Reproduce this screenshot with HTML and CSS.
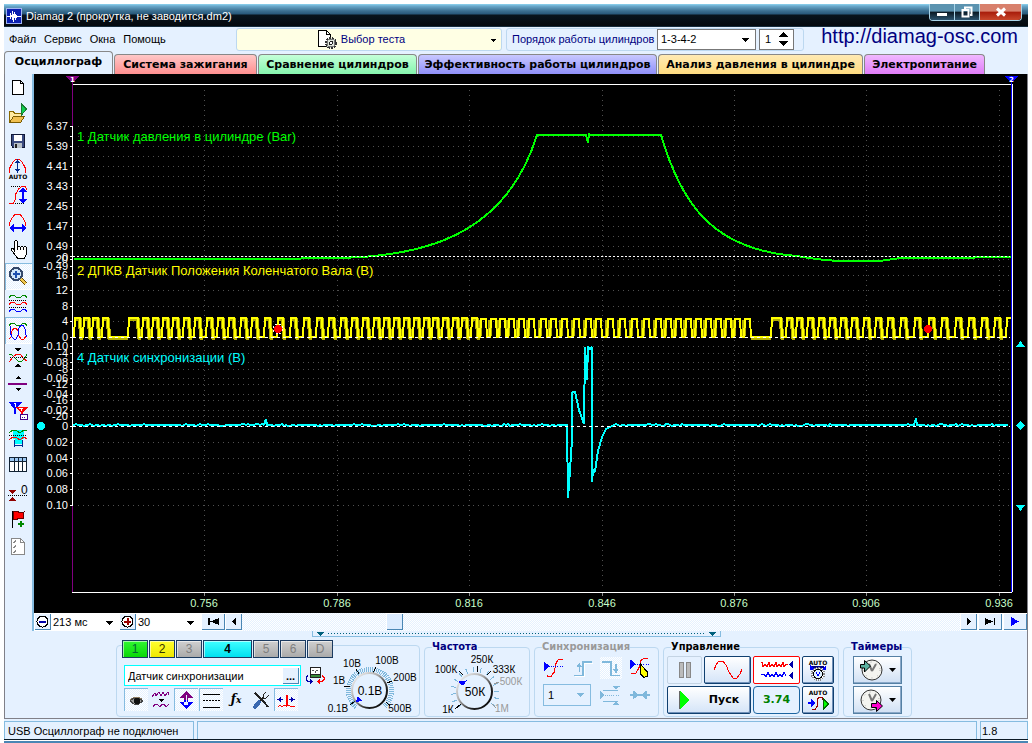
FILE: index.html
```
<!DOCTYPE html>
<html lang="ru">
<head>
<meta charset="utf-8">
<title>Diamag 2</title>
<link rel="stylesheet" href="styles.css">
</head>
<body>
<div class="window">
  <header class="titlebar">
    <svg class="app-icon" viewBox="0 0 16 16" width="16" height="16"><rect width="16" height="16" fill="#9fb4f0"/><rect x="1" y="1" width="14" height="14" fill="#0a1fb0"/><path d="M1 8.500h3M4.500 5v6M5.500 7v2M6.500 3v9M7.500 6v8M8.500 4v6M9.500 6v6M10.500 7v3M11 8.500h4" fill="none" stroke="#fff"/></svg>
    <h1 class="caption">Diamag 2 (прокрутка, не заводится.dm2)</h1>
    <div class="window-buttons">
      <button class="wb" aria-label="Свернуть"><svg viewBox="0 0 12 12" width="12" height="12"><rect x="1" y="7" width="10" height="3" fill="#fff"/></svg></button>
      <button class="wb" aria-label="Восстановить"><svg viewBox="0 0 12 12" width="12" height="12"><path d="M4 3V1.500h6.500V9H9M1.500 4h6v6.500h-6z" fill="none" stroke="#fff" stroke-width="2"/></svg></button>
      <button class="wb wb-close" aria-label="Закрыть"><svg viewBox="0 0 12 12" width="12" height="12"><path d="M2 2.500l8 7M10 2.500l-8 7" stroke="#fff" stroke-width="3"/></svg></button>
    </div>
  </header>

  <div class="menubar">
    <nav class="menu">
      <button>Файл</button><button>Сервис</button><button>Окна</button><button>Помощь</button>
    </nav>
    <button class="test-picker">
      <svg viewBox="0 0 22 21" width="22" height="21"><path d="M1.500 1.500h8l4 4v12h-12z" fill="#fff" stroke="#000"/><path d="M9.500 1.500v4h4" fill="none" stroke="#000"/><circle cx="14" cy="14" r="5" fill="#d4dcd0" stroke="#333" stroke-width="2" stroke-dasharray="2 1"/><circle cx="14" cy="14" r="4" fill="#dfe6dc" stroke="#777"/><circle cx="14" cy="14" r="1.500" fill="#fff" stroke="#222"/></svg>
      <span>Выбор теста</span>
      <svg class="drop" viewBox="0 0 7 4" width="7" height="4"><path d="M1 0h5L3.500 3z"/></svg>
    </button>
    <div class="order-box">
      <label for="order">Порядок работы цилиндров</label>
      <select id="order" class="pick order"><option>1-3-4-2</option></select>
      <span class="spin"><input aria-label="Цилиндр" value="1"><svg viewBox="0 0 9 15" width="9" height="15"><path d="M0 5h9L4.500 0zM0 9h9l-4.500 5z"/></svg></span>
    </div>
    <a class="site" href="http://diamag-osc.com">http://diamag-osc.com</a>
  </div>

  <nav class="tabs">
    <button class="tab tab-scope">Осциллограф</button>
    <button class="tab tab-ignition">Система зажигания</button>
    <button class="tab tab-compare">Сравнение цилиндров</button>
    <button class="tab tab-efficiency">Эффективность работы цилиндров</button>
    <button class="tab tab-pressure">Анализ давления в цилиндре</button>
    <button class="tab tab-power">Электропитание</button>
  </nav>

  <main class="work">
    <div class="scope">
      <div class="toolbar">
        <button class="tool" aria-label="Новый"><svg viewBox="1 0 27 27"><path d="M8.500 6.500h8l3 3v11h-11z" fill="#fff" stroke="#000"/><path d="M16.500 6.500v3h3" fill="none" stroke="#000"/></svg></button>
        <button class="tool" aria-label="Открыть"><svg viewBox="1 0 27 27"><path d="M5.500 21.500v-11h4l1 2h7v3" fill="#ffe9a0" stroke="#8a6a00"/><path d="M5.500 21.500l4-6h11l-4 6z" fill="#f0c050" stroke="#7a5a00"/><path d="M17.500 14V3l5 5z" fill="#0fd050" stroke="#1a7a30"/></svg></button>
        <button class="tool" aria-label="Сохранить"><svg viewBox="1 0 27 27"><path d="M7.500 6.500h13v13H9l-1.500-2z" fill="#3a4a80" stroke="#101838"/><rect x="10" y="7" width="8" height="6" fill="#fff"/><rect x="10" y="15" width="8" height="5" fill="#b8c0c8"/><rect x="11" y="16" width="2" height="4" fill="#222"/></svg></button>
        <button class="tool" aria-label="Авто"><svg viewBox="1 0 27 27"><path d="M5.500 17.500v-4l2-4 2-3 2-2h4l2 2 2 3 2 4v4" fill="none" stroke="#f00"/><path d="M13.500 6v10" stroke="#002a90"/><path d="M11 8h5l-2.500-4zM11 14h5l-2.500 4z" fill="#002a90"/><text x="14" y="24" class="tiny">AUTO</text></svg></button>
        <button class="tool" aria-label="Автомасштаб по вертикали"><svg viewBox="1 0 27 27"><path d="M7 4.500h13M9 21.500h11" stroke="#000" stroke-dasharray="1 1"/><path d="M5 21.500h4l2-3 1-7 3-5 3-2h3l2 3" fill="none" stroke="#f00"/><path d="M19 8v11" stroke="#00f" stroke-width="2"/><path d="M15 10h8l-4-5zM15 17h8l-4 5z" fill="#00f"/></svg></button>
        <button class="tool" aria-label="Масштаб по горизонтали"><svg viewBox="1 0 27 27"><path d="M5.500 17v-3l2-4 2-3 2-2h4l2 2 2 3 2 4v3" fill="none" stroke="#f00"/><path d="M8 19h12" stroke="#00f" stroke-width="2"/><path d="M10 15v8l-5-4zM18 15v8l5-4z" fill="#00f"/></svg></button>
        <button class="tool" aria-label="Рука"><svg viewBox="1 0 27 27"><path d="M10.500 15V5.500l1-1h1l1 1v6l1-1h1l1 1 1-1h1l1 1 1-1h1l1 1v7l-2 3.500h-7l-3-4-3.500-4v-1.500h2z" fill="#fff" stroke="#000"/><path d="M13.500 11v3M16.500 12v2M19.500 12v2" stroke="#000"/></svg></button>
        <button class="tool is-on" aria-label="Лупа"><svg viewBox="1 0 27 27"><path d="M17 16l5 5" stroke="#6a4a00" stroke-width="4"/><path d="M17 16l5 5" stroke="#f0c850" stroke-width="2"/><circle cx="12" cy="11" r="6" fill="#cfe6fb" stroke="#34486a" stroke-width="2"/><path d="M12 7.500v7M8.500 11h7" stroke="#1c50b0" stroke-width="2"/></svg></button>
        <button class="tool" aria-label="Раздельно"><svg viewBox="1 0 27 27"><g fill="none"><path d="M5 7.500l2-2h3l3 2h3l3-2h2l2 2" stroke="#080"/><path d="M5 10.500h18M5 17.500h18" stroke="#000" stroke-dasharray="1 1"/><path d="M5 14.500l2-2h3l3 2h3l3-2h2l2 2" stroke="#f00"/><path d="M5 21.500l2-2h3l3 2h3l3-2h2l2 2" stroke="#00f"/></g></svg></button>
        <button class="tool is-on" aria-label="Совместно"><svg viewBox="1 0 27 27"><g fill="none"><path d="M5 8.500l2-2h3l3 2h3l3-2h2l2 2" stroke="#080"/><path d="M5 22l2-2 1-6 2-3h2l2 3 1 5 2 3h3l2-3" stroke="#f00"/><path d="M6 9v6l2 5 2 2h2l2-4 1-7 2-3h2l2 4 1 6 1 2" stroke="#00f"/></g></svg></button>
        <button class="tool" aria-label="Сжать"><svg viewBox="1 0 27 27"><g fill="none"><path d="M5 10l3 1 4 4 3 3 3-1 3-3 2-4" stroke="#080"/><path d="M5 18l4-5 4-3h3l4 5 3 2" stroke="#f00"/><path d="M6 13.500h17" stroke="#000" stroke-dasharray="1 1"/></g><path d="M11 4h6l-3 4zM11 23h6l-3-4z"/></svg></button>
        <button class="tool" aria-label="Линия"><svg viewBox="1 0 27 27"><path d="M4 13h19" stroke="#800080" stroke-width="2"/><path d="M11 8h6l-3-3zM11 17h6l-3 3z"/></svg></button>
        <button class="tool" aria-label="Маркеры"><svg viewBox="1 0 27 27"><path d="M5 4h13l-6 7v5h-2v-5z" fill="#00f"/><path d="M12 9h12l-5 6v3h-2v-3z" fill="#f00"/><path d="M10 5.500h1.500V9M15 10.500h3l-1 2" fill="none" stroke="#fff"/><rect x="16.500" y="16.500" width="7" height="5" fill="#fff" stroke="#408"/><path d="M18 19.500h4" stroke="#408" stroke-dasharray="1 1"/></svg></button>
        <button class="tool" aria-label="Фаза"><svg viewBox="1 0 27 27"><path d="M9 5h11v9H9z" fill="#0ff"/><path d="M11 14h7v5h-7z" fill="#0ff"/><g fill="none"><path d="M5 8l4-3h3l4 3 4-3h3" stroke="#080"/><path d="M5 10.500h18" stroke="#000" stroke-dasharray="1 1"/><path d="M5 15l4-3 4 1 3 2 4-3 3 2" stroke="#f00"/><path d="M10.500 15v7M18.500 15v7M11 20.500h7" stroke="#002a90"/></g></svg></button>
        <button class="tool" aria-label="Таблица"><svg viewBox="1 0 27 27"><rect x="5.500" y="5.500" width="17" height="14" fill="#fff" stroke="#123"/><rect x="6" y="6" width="16" height="3" fill="#9cc8f4"/><path d="M6 9.500h16M10.500 6v13M14.500 6v13M18.500 6v13" stroke="#123"/></svg></button>
        <button class="tool" aria-label="Установить ноль"><svg viewBox="1 0 27 27"><path d="M4 16.500h20" stroke="#000" stroke-dasharray="1 1"/><path d="M5 11h7l-3.500 4zM5 22h7l-3.500-4z" fill="#900000"/><text x="17" y="15" class="zero">0</text></svg></button>
        <button class="tool" aria-label="Добавить метку"><svg viewBox="1 0 27 27"><path d="M8.500 5v17" stroke="#000"/><path d="M9 6l4-1 3 2 4-1-1 7-4-1-3 2-3-1z" fill="#f00" stroke="#600"/><path d="M17 15v6M14 18h6" stroke="#080" stroke-width="2"/></svg></button>
        <button class="tool" aria-label="Отчёт"><svg viewBox="1 0 27 27"><path d="M7.500 5.500h9l4 4v12h-13z" fill="#fff" stroke="#888"/><path d="M16.500 5.500v4h4M9 9l1 1 2-3M9 14l1 1 2-3M9 19l1 1 2-3" fill="none" stroke="#888"/></svg></button>
      </div>

      <div class="plot-column">
        <svg class="plot" id="plot" viewBox="34 74 993 539" role="img" aria-label="Осциллограмма">
          <g id="grid" class="grid"></g>
          <g class="axis-lines">
            <path d="M72 84.500H1012M72 592.500H1012" stroke="#fff"/>
            <path d="M72.500 79V592" stroke="#800080"/>
            <path d="M72.500 126V506" stroke="#fff"/>
            <path d="M1011.500 79V592" stroke="#00f"/>
            <path d="M1012.500 84V592" stroke="#fff"/>
            <path id="ticks" stroke="#fff" fill="none"/>
            <path d="M204.500 593v3M337.500 593v3M469.500 593v3M602.500 593v3M734.500 593v3M866.500 593v3M999.500 593v3" stroke="#888"/>
            <path d="M65 76h15l-7.500 7z" fill="#800080"/><path d="M1004 76h15l-7.500 7z" fill="#00f"/>
          </g>
          <text class="mark" x="70" y="82">1</text><text class="mark" x="1009" y="82">2</text>
          <g class="scale">
            <text x="68" y="130">6.37</text><text x="68" y="150">5.39</text><text x="68" y="170">4.41</text><text x="68" y="190">3.43</text><text x="68" y="210">2.45</text><text x="68" y="230">1.47</text><text x="68" y="250">0.49</text><text x="68" y="270">-0.49</text><text x="68" y="261">0</text>
            <text x="68" y="263">20</text><text x="68" y="279">16</text><text x="68" y="294">12</text><text x="68" y="310">8</text><text x="68" y="325">4</text><text x="68" y="341">0</text><text x="68" y="357">-4</text><text x="68" y="373">-8</text><text x="68" y="388">-12</text><text x="68" y="404">-16</text><text x="68" y="420">-20</text>
            <text x="68" y="350">-0.10</text><text x="68" y="366">-0.08</text><text x="68" y="382">-0.06</text><text x="68" y="398">-0.04</text><text x="68" y="414">-0.02</text><text x="68" y="430">0</text><text x="68" y="446">0.02</text><text x="68" y="462">0.04</text><text x="68" y="477">0.06</text><text x="68" y="493">0.08</text><text x="68" y="509">0.10</text>
          </g>
          <g class="time">
            <text x="204" y="607">0.756</text><text x="337" y="607">0.786</text><text x="469" y="607">0.816</text><text x="602" y="607">0.846</text><text x="734" y="607">0.876</text><text x="866" y="607">0.906</text><text x="999" y="607">0.936</text>
          </g>
          <path id="pressure" class="trace pressure" d="M74 259H273L330 258C420 258 505 238 537 135H586L588 143 589 133 590 135H661C680 200 710 250 797 256C815 259 825 261 845 261H880L900 258 970 258 980 257H1011"/>
          <path class="zero-line" d="M73 256.500H1010"/>
          <path id="crank-glow" class="crank-glow"/>
          <path id="crank" class="trace crank"/>
          <path class="zero-line wide" d="M73 337.500H1010"/>
          <path id="sync" class="trace sync"/>
          <path class="zero-line wide" d="M73 426.500H1010"/>
          <g fill="#f00"><circle cx="278" cy="329" r="5" fill="none" stroke="#fff" stroke-dasharray="2 2"/><circle cx="278" cy="329" r="4"/><circle cx="928" cy="329" r="4"/></g>
          <g fill="#0ff"><circle cx="41" cy="426" r="4"/><path d="M1016 347h9l-4.500-6zM1016 505h9l-4.500 6zM1020.500 421l4.500 4.500-4.500 4.500-4.500-4.500z"/></g>
          <text class="name pressure-name" x="77" y="141">1 Датчик давления в цилиндре (Bar)</text>
          <text class="name crank-name" x="77" y="275">2 ДПКВ Датчик Положения Коленчатого Вала (В)</text>
          <text class="name sync-name" x="77" y="362">4 Датчик синхронизации (В)</text>
        </svg>

        <div class="scroll-row">
          <button class="sq" aria-label="Уменьшить"><svg viewBox="0 0 13 13" width="13" height="13"><circle cx="6.500" cy="6.500" r="5.500" fill="#fff" stroke="#000"/><path d="M3 6.500h7" stroke="#00a" stroke-width="2"/></svg></button>
          <select class="flat span-ms" aria-label="Развёртка"><option>213 мс</option></select>
          <button class="sq" aria-label="Увеличить"><svg viewBox="0 0 13 13" width="13" height="13"><circle cx="6.500" cy="6.500" r="5.500" fill="#fff" stroke="#000"/><path d="M3 6.500h7M6.500 3v7" stroke="#900" stroke-width="2"/></svg></button>
          <select class="flat span-n" aria-label="Число"><option>30</option></select>
          <button class="sq sq-wide" aria-label="В начало"><svg viewBox="0 0 13 9" width="13" height="9"><path d="M1 1h2v7H1zM12 1v7L3 4.500z"/></svg></button>
          <button class="sq" aria-label="Назад"><svg viewBox="0 0 6 9" width="6" height="9"><path d="M5 0v9L1 4.500z"/></svg></button>
          <div class="scrollbar"><div class="thumb"></div></div>
          <button class="sq" aria-label="Вперёд"><svg viewBox="0 0 6 9" width="6" height="9"><path d="M1 0v9l4-4.500z"/></svg></button>
          <button class="sq sq-wide" aria-label="В конец"><svg viewBox="0 0 13 9" width="13" height="9"><path d="M10 1h1v7h-1zM1 1v7l8-3.500z"/></svg></button>
          <button class="sq sq-wide" aria-label="Воспроизвести"><svg viewBox="0 0 9 9" width="9" height="9"><path d="M0 0v9l8-4.500z" fill="#00f"/></svg></button>
        </div>
      </div>
    </div>

    <button class="splitter" aria-label="Свернуть панель"><svg viewBox="0 0 7 4" width="7" height="4"><path d="M0 0h7L3.500 4z"/></svg><i class="dots"></i><svg viewBox="0 0 7 4" width="7" height="4"><path d="M0 0h7L3.500 4z"/></svg></button>

    <div class="panel">
      <fieldset class="group channels">
        <legend class="channel-keys">
          <button class="ch c1">1</button><button class="ch c2">2</button><button class="ch">3</button><button class="ch c4">4</button><button class="ch">5</button><button class="ch">6</button><button class="ch">D</button>
        </legend>
        <div class="channel-body">
          <div class="channel-left">
            <div class="sensor-row">
              <div class="sensor"><input aria-label="Датчик" value="Датчик синхронизации"><button class="sq" aria-label="Выбрать">...</button></div>
              <button class="plain" aria-label="Поменять"><svg viewBox="0 0 20 20" width="20" height="20"><rect x="5" y="1" width="11" height="11" fill="#222"/><rect x="6" y="2" width="9" height="6" fill="#fff"/><path d="M7 4.500h2M11 4.500h2M10 5v2" fill="none" stroke="#555"/><rect x="6" y="9" width="9" height="2" fill="#3a8a3a"/><path d="M3 9.500l-2 2v2l2 2h3" fill="none" stroke="#00a"/><path d="M5 13v5l3-2.500z" fill="#00a"/><path d="M17 9.500l2 2v2l-2 2h-3" fill="none" stroke="#f00"/><path d="M15 13v5l-3-2.500z" fill="#f00"/></svg></button>
            </div>
            <div class="mode-row">
              <button class="mode is-on" aria-label="Видимость"><svg viewBox="0 0 20 20"><path d="M4 10q6-5 12-1" fill="none" stroke="#8a7a60"/><path d="M4 11l4-3h5l4 3-4 3H8z" fill="#999" stroke="#444"/><circle cx="11" cy="11" r="3" fill="#111"/></svg></button>
              <button class="mode" aria-label="Фильтр"><svg viewBox="0 0 20 20"><path d="M1 7l3-4 1 3 3-4 2 4 2-4 2 4 3-4 1 3M2 17l2-3h2l3 3 2-3h2l2 3 3-3" fill="none" stroke="#800080"/><path d="M7 9h6l-3 3z"/></svg></button>
              <button class="mode is-on" aria-label="Инверсия"><svg viewBox="0 0 20 20"><path d="M8 5h4v5H8zM3 8l7-7 7 7z" fill="#800080"/><path d="M8 10h4v5H8zM3 12l7 7 7-7z" fill="#00f"/><path d="M10 5v10" stroke="#e5f1ff" stroke-width="1"/></svg></button>
              <button class="mode is-on" aria-label="Линии"><svg viewBox="0 0 20 20"><path d="M2 4.500h17M2 17.500h17" stroke="#000"/><path d="M2 10.500h17" stroke="#000" stroke-dasharray="2 1"/></svg></button>
              <button class="mode fx" aria-label="Функция">ƒ<sub>x</sub></button>
              <button class="mode" aria-label="Настройка"><svg viewBox="0 0 20 20"><path d="M4 3l9 9 4 5" stroke="#222" stroke-width="2"/><path d="M15 2l-3 3v3h3l3-3" fill="none" stroke="#222"/><path d="M12 8l-4 4" stroke="#222" stroke-width="2"/><path d="M8 12l-4 5" stroke="#3a68b0" stroke-width="4" stroke-linecap="round"/></svg></button>
              <button class="mode is-on" aria-label="Сдвиг"><svg viewBox="0 0 20 20"><path d="M2 17l2-2 2 2 2-2 2 1V5h1v11l2-1 2 2 2-1 2 1" fill="none" stroke="#f00"/><path d="M3 9.500h4M13 9.500h5" stroke="#00a"/><path d="M5 7v5L1 9.500zM15 7v5l4-2.500z" fill="#00a"/></svg></button>
            </div>
          </div>
          <svg class="dial" viewBox="328 655 92 62" width="92" height="62" role="img" aria-label="Чувствительность 0.1В">
            <defs><linearGradient id="knob" x1="0" y1="0" x2="1" y2="1"><stop offset="0" stop-color="#fff"/><stop offset=".4" stop-color="#aaa"/><stop offset=".7" stop-color="#222"/><stop offset="1" stop-color="#000"/></linearGradient></defs>
            <path d="M357 708A21.500 21.500 0 1 1 385 708" fill="none" stroke="#7fb8dc" stroke-width="5" stroke-dasharray="1 1"/>
            <path d="M351 706l5-4M345 687l6 1M357 670l3 5M377 668l-3 6M393 682l-5 2M391 707l-4-4" stroke="#000"/>
            <circle cx="370.500" cy="691.500" r="17.500" fill="#e4f1ff" stroke="url(#knob)" stroke-width="2"/>
            <path d="M357 703l6-1-4-5z" fill="#00f"/>
            <text class="value" x="371" y="696">0.1В</text>
            <text x="353" y="668">10В</text><text x="388" y="665">100В</text><text x="406" y="682">200В</text><text x="401" y="713">500В</text><text x="339" y="713">0.1В</text><text x="340" y="685">1В</text>
          </svg>
        </div>
      </fieldset>

      <fieldset class="group freq">
        <legend class="navy">Частота</legend>
        <svg class="dial" viewBox="428 654 98 60" width="98" height="60" role="img" aria-label="Частота 50К">
          <path d="M459 707A22 22 0 1 1 491 707" fill="none" stroke="#7fb8dc" stroke-width="5" stroke-dasharray="1 6"/>
          <path d="M455 709l6-5M459 671l4 4M477 666v6M491 671l-4 4" stroke="#000"/><path d="M499 682l-5 2M496 708l-4-4" stroke="#999"/>
          <circle cx="474.500" cy="691.500" r="17.500" fill="#e4f1ff" stroke="url(#knob)" stroke-width="2"/>
          <path d="M459 682l7-1-3 4z" fill="#00f" stroke="#00f"/>
          <text class="value" x="475" y="696">50К</text>
          <text x="482" y="663">250К</text><text x="446" y="673">100К</text><text x="504" y="673">333К</text><text class="off" x="511" y="685">500К</text><text class="off" x="502" y="712">1М</text><text x="448" y="713">1К</text>
        </svg>
      </fieldset>

      <fieldset class="group syncs">
        <legend class="off">Синхронизация</legend>
        <div class="sync-grid">
          <div class="sync-row">
            <svg viewBox="0 0 20 20"><path d="M4 16v2h3l3-4 2-9 2-3h4" fill="none" stroke="#f00"/><path d="M3 8.500h15" stroke="#00f" stroke-dasharray="1 1"/><path d="M1 4v9l5-4.500z" fill="#00f"/></svg>
            <svg viewBox="0 0 20 20"><path d="M3 17.500h8v-12h8" fill="none" stroke="#fff"/><path d="M2 16.500h8v-12h8M6.500 8v6" fill="none" stroke="#7fb8dc"/><path d="M4 9h5l-2.500-4z" fill="#7fb8dc"/></svg>
            <svg class="hatch" viewBox="0 0 20 20"><path d="M2 4.500h8v12h8M14.500 6v6" fill="none" stroke="#7fb8dc"/><path d="M12 11h5l-2.500 4z" fill="#7fb8dc"/></svg>
            <svg viewBox="0 0 20 20"><path d="M2 15h4l3-5 2-7 3-2h3" fill="none" stroke="#f00"/><path d="M1 6.500h18" stroke="#00f" stroke-dasharray="1 1"/><path d="M1 2v9l5-4.500z" fill="#00f"/><path d="M10.500 6.500l6 7v4l-3 1-3-3z" fill="#ff0" stroke="#000"/></svg>
          </div>
          <div class="sync-row">
            <select class="sync-source" aria-label="Канал синхронизации" disabled><option>1</option></select>
            <svg viewBox="0 0 20 20"><path d="M4 5.500h13M4 15.500h13" stroke="#7fb8dc"/><path d="M5 10.500h14" stroke="#7fb8dc" stroke-dasharray="1 1"/><path d="M1 6v8l4-4zM12 2h7l-3.500 3zM12 19h7l-3.500-3z" fill="#7fb8dc"/></svg>
            <svg viewBox="0 0 20 20"><path d="M1 10h18" stroke="#7fb8dc" stroke-width="2"/><path d="M4 6v8l5-4zM16 6v8l-5-4z" fill="#7fb8dc"/></svg>
          </div>
        </div>
      </fieldset>

      <fieldset class="group control">
        <legend>Управление</legend>
        <div class="control-grid">
          <button class="big off" aria-label="Пауза"><svg viewBox="0 0 14 18" width="14" height="18"><path d="M1.500 1.500h4v15h-4zM8.500 1.500h4v15h-4z" fill="#bbb" stroke="#888"/></svg></button>
          <button class="big" aria-label="Осциллограмма"><svg viewBox="0 0 30 20" width="30" height="20"><path d="M1 10l2-5 3-4h4l3 4 3 7 4 6h4l3-4 2-5" fill="none" stroke="#f00"/></svg></button>
          <button class="big red" aria-label="Потоковый режим"><svg viewBox="0 0 34 20" width="34" height="20"><path d="M1 2h1l1 5 2-3 2 3 2-5 1 5 2-3 2 3 2-5 1 5 2-3 2 3 2-5 1 5 2-3h2" fill="none" stroke="#f00"/><path d="M1 14h3l2 3 2-5 2 5 2-3 2 3 2-5 2 5 2-3 2 3 2-5 2 4" fill="none" stroke="#00f"/><path d="M33 1v7l-4-3.500zM33 12v7l-4-3.500z" fill="#00a"/></svg></button>
          <button class="big" aria-label="Автонастройка"><svg viewBox="0 0 26 24" width="26" height="24"><text class="tiny" x="13" y="7">AUTO</text><path d="M5 10q8-3 16 0" fill="none" stroke="#008" stroke-width="2"/><path d="M5 7l5 5H5zM21 7l-5 5h5z" fill="#00f"/><circle cx="13" cy="16" r="6" fill="#fff" stroke="#888" stroke-width="2" stroke-dasharray="1 1"/><circle cx="13" cy="16" r="4.500" fill="#dff0ff" stroke="#000"/><path d="M11 14l2 4 2-4" fill="none" stroke="#00f"/></svg></button>
          <button class="big start"><svg viewBox="0 0 10 18" width="10" height="18"><path d="M1 0v18l9-9z" fill="#0f0"/><path d="M.500 0v18" stroke="#666"/></svg><span>Пуск</span></button>
          <output class="readout">3.74</output>
          <button class="big" aria-label="Автозапуск"><svg viewBox="0 0 26 24" width="26" height="24"><text class="tiny" x="13" y="7">AUTO</text><path d="M7 21.500h3l2-3v-7l2-2h3l1 2" fill="none" stroke="#900"/><path d="M3 15h4" stroke="#00f" stroke-width="2"/><path d="M6 11v8l4-4z" fill="#00f"/><path d="M18.500 11v10l5-5z" fill="#0f0" stroke="#060"/></svg></button>
        </div>
      </fieldset>

      <fieldset class="group timers">
        <legend class="navy">Таймеры</legend>
        <div class="timer-stack">
          <button class="timer" aria-label="Таймер запуска"><svg viewBox="0 0 24 24" width="24" height="24"><circle cx="13" cy="12" r="10" fill="#f4f4f0" stroke="#333"/><path d="M13 13l4-7M13 13l-3-7" stroke="#777" stroke-width="2"/><circle cx="13" cy="12" r="8" fill="none" stroke="#aaa" stroke-dasharray="1 5"/><path d="M1.500 6.500h4v-4l6 5.500-6 6v-4h-4z" fill="#5ab0a0" stroke="#000"/></svg><svg viewBox="0 0 7 4" width="7" height="4"><path d="M0 0h7L3.500 4z"/></svg></button>
          <button class="timer" aria-label="Таймер остановки"><svg viewBox="0 0 24 24" width="24" height="24"><circle cx="12" cy="12" r="10" fill="#f4f4f0" stroke="#333"/><path d="M13 13l4-7M13 13l-3-7" stroke="#777" stroke-width="2"/><circle cx="12" cy="12" r="8" fill="none" stroke="#aaa" stroke-dasharray="1 5"/><path d="M12.500 15.500h5v-3l6 5.500-6 5.500v-4h-5z" fill="#f0c" stroke="#000"/></svg><svg viewBox="0 0 7 4" width="7" height="4"><path d="M0 0h7L3.500 4z"/></svg></button>
        </div>
      </fieldset>
    </div>
  </main>

  <footer class="status"><span class="cell cell-a">USB Осциллограф не подключен</span><span class="cell cell-b"></span><span class="cell cell-c">1.8</span></footer>
</div>
<script src="scope.js"></script>
</body>
</html>
```
FILE: styles.css
```
* { box-sizing: border-box; }
body { margin: 0; padding: 4px 4px 0; min-height: 100vh; background: #fff; font: 11px/14px "Liberation Sans", Arial, sans-serif; color: #000; }
button, select, input { font: inherit; color: inherit; margin: 0; padding: 0; border: 0; background: none; }
button { cursor: pointer; }
svg { display: block; flex: none; shape-rendering: crispEdges; }
.window { background: #e5f1ff; border-bottom: 2px solid #4a86b4; box-shadow: inset 0 -1px #fff, inset 0 -2px #0b1a26; padding-bottom: 2px; }

.titlebar { display: flex; align-items: center; height: 23px; padding-left: 2px; background: linear-gradient(#8fd4f0 0, #6aa9cc 2px, #3b6f90 7px, #28587a 10px, #08141d 11px, #04090e 22px, #27506c 23px); color: #fff; }
.caption { flex: 1; margin: 0 0 0 4px; font-size: 11px; font-weight: 400; }
.window-buttons { display: flex; align-self: flex-start; margin-right: 6px; border: 1px solid #a8d4e8; border-top: 0; border-radius: 0 0 4px 4px; overflow: hidden; }
.wb { display: grid; place-items: center; width: 25px; height: 16px; border-right: 1px solid #a8d4e8; background: linear-gradient(#5b93b0 45%, #0a1822 50%, #2c5570); }
.wb svg { shape-rendering: auto; }
.wb-close { width: 41px; border-right: 0; background: linear-gradient(#d8806c 45%, #a81c0a 50%, #c8482c); }

.menubar { display: flex; align-items: center; height: 24px; }
.menu { display: flex; gap: 8px; width: 232px; padding-left: 5px; }
.test-picker { display: flex; align-items: center; justify-content: center; gap: 2px; position: relative; width: 266px; height: 23px; padding-right: 16px; background: #ffffe4; border: 1px solid #bcd8f0; border-radius: 3px; color: #000080; }
.test-picker .drop { position: absolute; right: 4px; top: 10px; }
.order-box { display: flex; align-items: center; margin-left: 4px; width: 298px; height: 23px; padding-left: 5px; border: 1px solid #bcd8f0; border-radius: 3px; color: #000080; }
.order-box label { width: 145px; white-space: nowrap; }
.pick, .spin { height: 21px; border: 1px solid #777; background-color: #fff; color: #000; }
select { appearance: none; border-radius: 0; background-image: linear-gradient(#000, #000), linear-gradient(#000, #000), linear-gradient(#000, #000), linear-gradient(#000, #000); background-repeat: no-repeat; background-size: 7px 1px, 5px 1px, 3px 1px, 1px 1px; background-position: right 6px top 8px, right 7px top 9px, right 8px top 10px, right 9px top 11px; }
.order { width: 99px; padding-left: 3px; }
.spin { display: flex; align-items: center; justify-content: space-between; width: 35px; margin-left: 3px; padding: 0 5px; }
.spin input { width: 12px; }
.site { margin-left: auto; margin-right: 10px; color: #000080; font-size: 20px; line-height: 20px; text-decoration: none; align-self: flex-start; margin-top: -1px; }

.tabs { display: flex; align-items: flex-end; gap: 1px; height: 23px; }
.tab { height: 20px; border: 1px solid #888; border-bottom: 0; border-radius: 4px 4px 0 0; font: bold 11px/18px "DejaVu Sans", Verdana, sans-serif; white-space: nowrap; flex: none; }
.tab-scope { width: 109px; height: 23px; background: #e5f1ff; padding-bottom: 3px; }
.tab-ignition { width: 143px; background: linear-gradient(#ffc8c8, #ff8f8f); }
.tab-compare { width: 159px; background: linear-gradient(#c4ffd8, #86f5ae); }
.tab-efficiency { width: 239px; background: linear-gradient(#c8c8ff, #9090fa); }
.tab-pressure { width: 205px; background: linear-gradient(#ffeab4, #ffdc80); }
.tab-power { width: 121px; background: linear-gradient(#f0b8ff, #e07cf8); }

.work { border: 1px solid #808088; border-top: 0; }
.scope { display: flex; }
.toolbar { width: 29px; border-right: 2px solid #86bce0; }
.tool { display: block; width: 27px; height: 27px; }
.tool svg { width: 27px; height: 27px; }
.is-on, .hatch, .scrollbar { background: repeating-conic-gradient(#fff 0 25%, #e5f1ff 0 50%) 0 0 / 2px 2px; }
.tool.is-on { box-shadow: inset 1px 1px #86bce0, inset -1px -1px #fff; }
.tiny { font: bold 6px "DejaVu Sans", sans-serif; text-anchor: middle; }
.zero { font: 12px "Liberation Sans", sans-serif; }
.plot-column { flex: 1; min-width: 0; }
.plot { width: 100%; height: auto; background: #000; }
.grid path { stroke: #505050; fill: none; stroke-dasharray: 1 4; }
.scale { fill: #fff; font-size: 11px; text-anchor: end; }
.time { fill: #c8ffc8; font-size: 11px; text-anchor: middle; }
.mark { fill: #fff; font: bold 7px "DejaVu Sans", sans-serif; }
.trace { fill: none; stroke-width: 2; stroke-linejoin: bevel; }
.pressure { stroke: #0f0; }
.crank { stroke: #ff0; }
.crank-glow { stroke: #b4b000; stroke-width: 4; fill: none; stroke-linejoin: bevel; }
.sync { stroke: #0ff; }
.zero-line { stroke: #fff; stroke-dasharray: 2 2; fill: none; }
.zero-line.wide { stroke-dasharray: 3 3; }
.name { font-size: 13px; }
.pressure-name { fill: #0f0; }
.crank-name { fill: #ff0; }
.sync-name { fill: #0ff; }

.scroll-row { display: flex; height: 18px; background: #fff; }
.sq { display: grid; place-items: center; width: 17px; height: 17px; flex: none; background: #e5f1ff; box-shadow: inset 1px 1px #fff, inset -1px -1px #4a86b4; }
.sq-wide { width: 24px; margin-left: 1px; }
.flat { background-color: #fff; padding-left: 2px; height: 17px; }
.span-ms { width: 68px; }
.span-n { width: 64px; }
.scrollbar { flex: 1; padding-left: 144px; }
.thumb { width: 17px; height: 17px; background: #dcecff; box-shadow: inset 1px 1px #fff, inset -1px -1px #4a86b4; }
.splitter { display: flex; align-items: center; gap: 4px; width: 409px; max-width: 100%; height: 7px; margin: -1px auto 0; padding: 0 4px; border: 1px solid #86bce0; fill: #00607c; }
.dots { flex: 1; height: 1px; background: repeating-linear-gradient(90deg, #00607c 0 1px, transparent 1px 3px); }

.panel { display: flex; gap: 4px; padding: 3px 0 1px 111px; }
.group { min-width: 0; margin: 0; padding: 0; border: 1px solid #bcd8f0; border-radius: 4px; height: 77px; flex: none; }
legend { font: bold 11px/14px "DejaVu Sans Condensed", Tahoma, sans-serif; margin-left: 7px; padding: 0; }
.navy { color: #000080; }
legend.off { color: #999; }
.channels { width: 304px; }
.channel-keys { display: flex; gap: 1px; height: 10px; margin-left: 5px; }
.ch { width: 26px; height: 18px; border: 1px solid #1a3a60; box-shadow: inset 1px 1px #ffffff90; background: linear-gradient(#d0d0d0, #aaa); color: #808080; font: 12px/16px "Liberation Sans", sans-serif; }
.c1 { background: linear-gradient(#30f830, #08d808); color: #063; }
.c2 { background: linear-gradient(#ffff30, #f0e800); color: #330; }
.c4 { width: 49px; background: linear-gradient(#40ffff, #00e0f0); color: #000; font-weight: bold; }
.channel-body { display: flex; justify-content: space-between; }
.channel-body .dial { margin-top: 4px; }
.channel-left { padding: 15px 0 0 7px; }
.sensor-row { display: flex; gap: 4px; }
.sensor { display: flex; width: 177px; height: 21px; border: 1px solid #0ff; background: #fff; padding: 1px; }
.sensor input { flex: 1; min-width: 0; padding-left: 2px; }
.sensor .sq { font-weight: bold; line-height: 8px; }
.plain { width: 20px; }
.mode-row { display: flex; gap: 1px; padding-top: 2px; }
.mode { width: 24px; height: 23px; display: grid; place-items: center; }
.mode svg { width: 20px; height: 20px; }
.mode.is-on { box-shadow: inset 1px 1px #86bce0; }
.fx { display: block; font: italic bold 12px/18px "DejaVu Serif", serif; }
.fx sub { font-size: 9px; vertical-align: baseline; }
.dial { font-size: 10px; text-anchor: middle; }
.dial circle { shape-rendering: auto; }
.dial .value { font-size: 12px; }
.dial .off { fill: #999; }
.freq { width: 106px; }
.freq .dial { margin: 0 auto; }
.syncs { width: 125px; }
.sync-grid { display: grid; gap: 5px; padding: 3px 7px 0 8px; }
.sync-row { display: flex; justify-content: space-between; align-items: center; }
.sync-row svg { width: 22px; height: 22px; }
.sync-source { width: 48px; height: 22px; padding-left: 4px; border: 1px solid #86bce0; background-image: linear-gradient(#7fb8dc, #7fb8dc), linear-gradient(#7fb8dc, #7fb8dc), linear-gradient(#7fb8dc, #7fb8dc), linear-gradient(#7fb8dc, #7fb8dc); color: #000; opacity: 1; }
.control { width: 176px; }
.control-grid { display: grid; grid-template-columns: 35px 47px 47px 32px; gap: 2px; padding: 2px 3px 0; }
.big { display: flex; align-items: center; justify-content: center; height: 28px; border: 1px solid #104070; border-radius: 2px; background: linear-gradient(#fff, #d4e4f8); box-shadow: inset -1px -1px #7090b8; }
.big.off { border-color: #c4d4e4; background: #e5f1ff; box-shadow: none; }
.big.red { border-color: #f00; background: #fff; box-shadow: none; }
.start { grid-column: 1 / 3; gap: 20px; font: bold 11px/14px "DejaVu Sans", sans-serif; }
.readout { height: 28px; border: 1px solid #1c64a0; border-radius: 4px; text-align: center; color: #008000; font: bold 11px/26px "DejaVu Sans", sans-serif; }
.timers { width: 69px; }
.timer-stack { display: grid; gap: 2px; padding: 2px 9px 0; }
.timer { display: flex; align-items: center; gap: 6px; width: 49px; height: 28px; padding-left: 5px; border: 1px solid #5580a4; background: linear-gradient(#fff, #d0e0f4); box-shadow: inset -1px -1px #8aa8c8; }
.timer svg { shape-rendering: auto; }

.status { display: grid; grid-template-columns: 190px 1fr 48px; gap: 3px; padding-top: 2px; }
.cell { height: 18px; padding: 1px 3px; border: 1px solid #86bce0; border-width: 1px 1px 0 1px; line-height: 16px; }
.cell-c { padding-left: 1px; }
```
FILE: scope.js
```
const byId = id => document.getElementById(id);

/* dotted grid and axis ticks */
const rows = [];
for (let y = 126; y <= 266; y += 10) rows.push(y);
[259, 275, 290, 306, 321, 353, 369, 384, 400, 416].forEach(y => rows.push(y));
[346, 362, 378, 394, 410, 442, 458, 473, 489, 505].forEach(y => rows.push(y));
const columns = [204, 337, 469, 602, 734, 866, 999];
let grid = '';
rows.forEach(y => { grid += `M78 ${y}.5H1010`; });
columns.forEach(x => { grid += `M${x}.5 90V590`; });
byId('grid').innerHTML = `<path d="${grid}"/>`;
byId('ticks').setAttribute('d', rows.concat([337, 426]).map(y => `M70 ${y}.5h3`).join(''));

/* crankshaft sensor: rising edges of every tooth */
const teeth = [74, 83, 92, 102, 128, 142, 152, 162, 172, 183, 194, 206, 217, 228, 240, 251, 264, 277, 290, 303, 316, 328, 340, 351, 362, 373, 383, 393, 403, 413, 423, 432, 442, 452, 461, 471, 480, 490, 499, 508, 518, 528, 540, 550, 561, 573, 585, 595, 607, 619, 631, 643, 655, 665, 675, 685, 695, 705, 715, 725, 734, 744, 771, 786, 796, 807, 818, 829, 840, 851, 863, 875, 887, 900, 914, 928, 941, 955, 968, 981, 994, 1006];
const firstWide = new Set([128, 771]);
let crank = 'M73 337';
let glow = '';
teeth.forEach(x => {
  const w = firstWide.has(x) ? 10 : 6;
  const outer = x < 480 || x > 760;
  const edgeY = outer ? 318 : 319;
  crank += `H${x}L${x + 1} ${edgeY}`;
  crank += x + w > 1010 ? 'H1011' : `H${x + w}L${x + w + 1} 337`;
  if (x + w < 1010) {
    if (outer) glow += `M${x} 319H${x + w}L${x + w + 1} 338h2`;
    else glow += `M${x} 336V320`;
  }
});
byId('crank').setAttribute('d', crank);
byId('crank-glow').setAttribute('d', `${glow}M108 338H128M751 338H771`);

/* synchronisation sensor: a slightly noisy baseline with one ignition burst */
let seed = 7;
const noise = () => { seed = (seed * 16807) % 2147483647; return Math.floor(seed / 2147483647 * 3) - 1; };
const baseline = (from, to) => {
  let d = '';
  for (let x = from; x < to; x += 2) d += `L${x} ${425 + (noise() > 0 ? noise() : 0)}`;
  return d;
};
const burst = 'L567 425 568 498 570 470 572 440 572 392 575 392 579 410 584 424 585 347 587 380 588 346 590 350 591 347 592 348 592 482 593 470 595 472 598 451 602 437 606 429 612 426';
byId('sync').setAttribute('d', `M73 425${baseline(74, 265)}L266 419 267 425${baseline(268, 566)}${burst}${baseline(614, 915)}L916 418 917 425${baseline(918, 1010)}`);
```
